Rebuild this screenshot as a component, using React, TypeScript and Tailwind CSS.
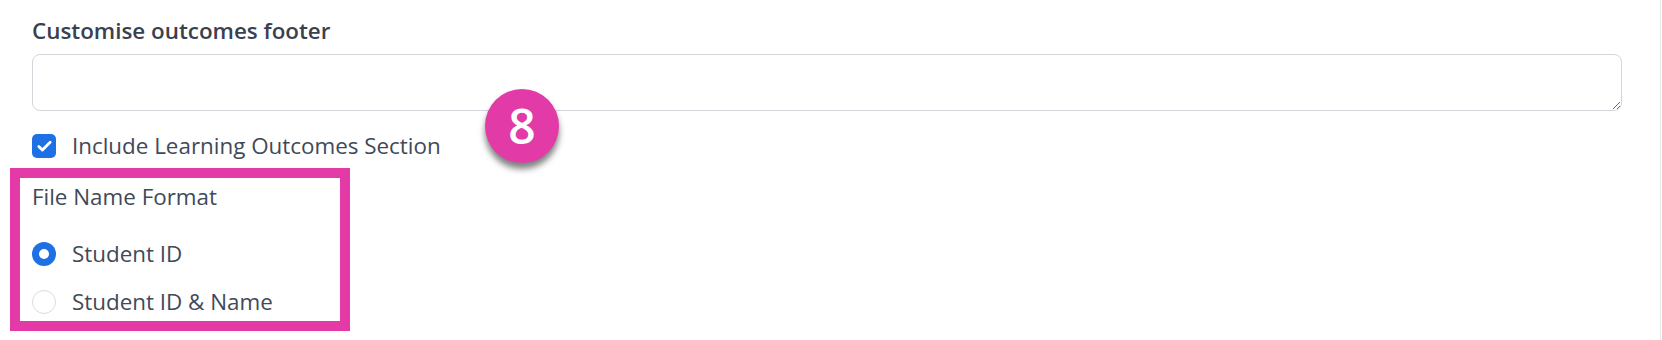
import { Check } from 'lucide-react';

const font = { fontFamily: '"Open Sans", "Liberation Sans", sans-serif' };

function Radio({ checked, label }: { checked?: boolean; label: string }) {
  return (
    <label className="flex items-center gap-4 h-[30px]">
      {checked ? (
        <span className="w-6 h-6 rounded-full bg-[#1f6fe5] flex items-center justify-center">
          <span className="w-[10px] h-[10px] rounded-full bg-white" />
        </span>
      ) : (
        <span className="w-6 h-6 rounded-full border border-[#dcdcdc] bg-white" />
      )}
      <span>{label}</span>
    </label>
  );
}

export default function App() {
  return (
    <div
      className="relative w-[1661px] h-[340px] bg-white border-r border-[#ececec] pl-8 pt-4 text-[22.4px] leading-[30px] text-[#414959]"
      style={font}
    >
      <h2 className="font-semibold text-[#394150]">Customise outcomes footer</h2>

      <textarea className="mt-2 block w-[1590px] h-[57px] rounded-lg border border-[#d4d6db] bg-white outline-none" />

      <label className="mt-5 flex items-center gap-4 h-[30px]">
        <span className="w-6 h-6 rounded-[5px] bg-[#1f6fe5] flex items-center justify-center">
          <Check className="w-[17px] h-[17px] text-white" strokeWidth={4} />
        </span>
        <span>Include Learning Outcomes Section</span>
      </label>

      <div className="mt-[7px] -ml-[22px] w-[340px] border-[10px] border-[#e43aa8] pl-3 pt-1 pb-1">
        <p>File Name Format</p>
        <div className="mt-[27px] flex flex-col gap-[18px]">
          <Radio checked label="Student ID" />
          <Radio label="Student ID & Name" />
        </div>
      </div>

      <div className="absolute left-[485px] top-[89px] w-[74px] h-[74px] rounded-full bg-[#e23aa6] shadow-[0_6px_6px_rgba(0,0,0,0.5)] flex items-center justify-center text-white text-[48px] font-semibold leading-none">
        8
      </div>
    </div>
  );
}
